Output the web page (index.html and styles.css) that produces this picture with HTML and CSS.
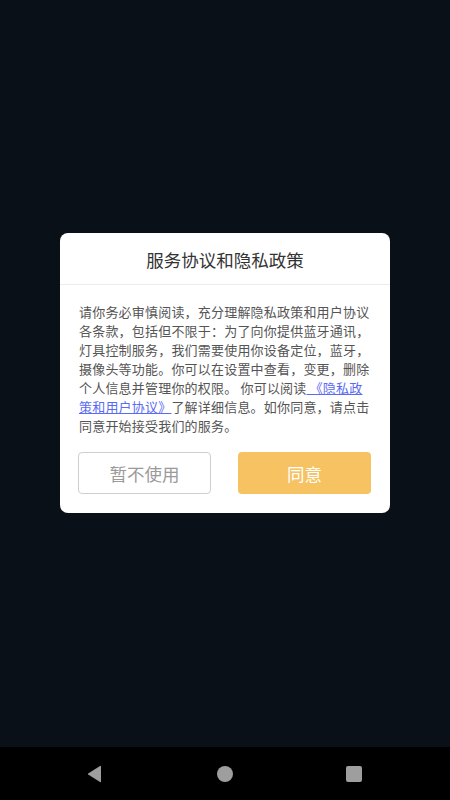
FILE: index.html
```html
<!DOCTYPE html>
<html lang="zh">
<head>
<meta charset="utf-8">
<link rel="stylesheet" href="styles.css">
</head>
<body>
<div class="screen">
  <div class="content">
    <div class="dialog">
      <div class="title">服务协议和隐私政策</div>
      <div class="body">
        <p class="text">请你务必审慎阅读，充分理解隐私政策和用户协议各条款，包括但不限于：为了向你提供蓝牙通讯，灯具控制服务，我们需要使用你设备定位，蓝牙，摄像头等功能。你可以在设置中查看，变更，删除个人信息并管理你的权限。 你可以阅读<a class="link">&nbsp;《隐私政策和用户协议》</a>了解详细信息。如你同意，请点击同意开始接受我们的服务。</p>
        <div class="buttons">
          <div class="btn btn-cancel">暂不使用</div>
          <div class="btn btn-ok">同意</div>
        </div>
      </div>
    </div>
  </div>
  <div class="navbar">
    <svg class="nav-icon" width="20" height="20" viewBox="0 0 20 20"><path d="M16 2.5 L16 17.5 Q16 18.5 15 18 L3.2 10.6 Q2.4 10 3.2 9.4 L15 2 Q16 1.5 16 2.5 Z" fill="#9e9e9e"/></svg>
    <svg class="nav-icon" width="20" height="20" viewBox="0 0 20 20"><circle cx="10" cy="10" r="8" fill="#9e9e9e"/></svg>
    <svg class="nav-icon" width="20" height="20" viewBox="0 0 20 20"><rect x="2" y="2" width="16" height="16" rx="2" fill="#9e9e9e"/></svg>
  </div>
</div>
</body>
</html>
```
FILE: styles.css
```css
* { box-sizing: border-box; }
html, body {
  margin: 0;
  padding: 0;
  width: 450px;
  height: 800px;
  overflow: hidden;
  font-family: "Noto Sans CJK SC", "Noto Sans", sans-serif;
}
.screen {
  width: 450px;
  height: 800px;
  display: flex;
  flex-direction: column;
  background: #0a1017;
}
.content {
  flex: 1;
  display: flex;
  justify-content: center;
  padding-top: 233px;
}
.dialog {
  width: 330px;
  height: 280px;
  background: #fff;
  border-radius: 8px;
  display: flex;
  flex-direction: column;
}
.title {
  height: 52px;
  display: flex;
  align-items: center;
  justify-content: center;
  font-size: 17.5px;
  color: #333;
  border-bottom: 1px solid #ececec;
  padding-top: 2px;
}
.body {
  padding: 17px 19px 18px 19px;
}
.text {
  margin: 0;
  font-size: 13px;
  letter-spacing: 0.2px;
  line-height: 19px;
  color: #555;
}
.link {
  color: #5a6cf2;
  text-decoration: underline;
}
.buttons {
  display: flex;
  justify-content: space-between;
  margin-top: 17px;
}
.btn {
  width: 133px;
  height: 42px;
  border-radius: 4px;
  display: flex;
  align-items: center;
  justify-content: center;
  font-size: 17.5px;
}
.btn-cancel {
  border: 1px solid #cfcfcf;
  color: #9a9a9a;
  margin-left: -1px;
}
.btn-ok {
  background: #f6c262;
  color: #fff;
}
.navbar {
  height: 53px;
  background: #000;
  display: flex;
  align-items: center;
  justify-content: space-between;
  padding: 0 86px 0 85px;
}
.nav-icon { display: block; }
```
